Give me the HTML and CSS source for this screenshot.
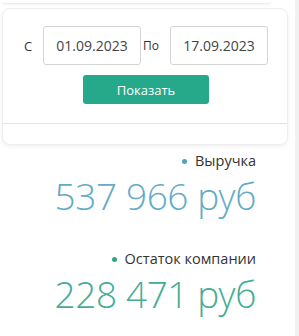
FILE: index.html
```html
<!DOCTYPE html>
<html lang="ru">
<head>
<meta charset="utf-8">
<link rel="stylesheet" href="styles.css">
</head>
<body>
<div class="page">
  <div class="main">
    <div class="prev-card"></div>
    <div class="card">
      <div class="filter">
        <div class="dates">
          <span class="lbl lbl-from">С</span>
          <div class="input">01.09.2023</div>
          <span class="lbl lbl-to">По</span>
          <div class="input">17.09.2023</div>
        </div>
        <button class="btn">Показать</button>
      </div>
      <div class="card-foot"></div>
    </div>
    <div class="stat">
      <div class="stat-label"><span class="dot dot-blue"></span>Выручка</div>
      <div class="stat-value value-blue">537 966 руб</div>
    </div>
    <div class="stat stat-second">
      <div class="stat-label"><span class="dot dot-green"></span>Остаток компании</div>
      <div class="stat-value value-green">228 471 руб</div>
    </div>
  </div>
  <div class="side"></div>
</div>
</body>
</html>
```
FILE: styles.css
```css
html, body {
  margin: 0;
  padding: 0;
  background: #ffffff;
  font-family: "Open Sans", "Noto Sans", sans-serif;
  color: #333;
}
.page {
  display: flex;
  width: 299px;
  height: 336px;
  overflow: hidden;
}
.main {
  width: 291px;
  padding-left: 2px;
}
.side {
  margin-left: 2px;
  width: 4px;
  background: #f1f1f1;
}
.prev-card {
  height: 3px;
  margin-right: 22px;
  border-bottom: 1px solid #ececec;
  border-radius: 0 0 10px 10px;
  box-shadow: 0 1px 3px rgba(0,0,0,0.05);
}
.card {
  margin-top: 4px;
  width: 286px;
  background: #fff;
  border: 1px solid #eeeeee;
  border-radius: 8px;
  box-shadow: 0 2px 4px rgba(0,0,0,0.06);
  box-sizing: border-box;
}
.filter {
  padding: 17px 0 19px 0;
  border-bottom: 1px solid #e2e2e2;
}
.dates {
  display: flex;
  align-items: center;
}
.lbl {
  font-size: 13px;
  color: #333;
}
.lbl-from {
  margin-left: 21px;
  width: 19px;
}
.lbl-to {
  width: 27px;
  font-size: 12px;
  margin-left: 2px;
}
.input {
  width: 98px;
  height: 39px;
  box-sizing: border-box;
  border: 1px solid #d4d4d4;
  border-radius: 3px;
  font-size: 14px;
  color: #444;
  display: flex;
  align-items: center;
  justify-content: center;
}
.btn {
  display: block;
  margin: 10px 0 0 80px;
  width: 126px;
  height: 29px;
  background: #26a98a;
  border: none;
  border-radius: 3px;
  color: #fff;
  font-family: "Open Sans", sans-serif;
  font-size: 13px;
  padding: 0;
}
.card-foot {
  height: 20px;
}
.stat {
  width: 254px;
  display: flex;
  flex-direction: column;
  align-items: flex-end;
  margin-top: 6px;
}
.stat-second {
  margin-top: 31px;
}
.stat-label {
  font-size: 14.5px;
  color: #333;
  display: flex;
  align-items: center;
  line-height: 20px;
}
.dot {
  width: 5px;
  height: 5px;
  border-radius: 50%;
  margin-right: 8px;
}
.dot-blue { background: #4ba3bd; }
.dot-green { background: #2ea587; }
.stat-value {
  font-family: "Open Sans Light", "Roboto Light", "Lato Light", "Open Sans", sans-serif;
  font-size: 37px;
  font-weight: 300;
  line-height: 44px;
  margin-top: 3px;
  letter-spacing: -0.4px;
}
.value-blue { color: #63acc5; }
.value-green { color: #45ad94; }
```
